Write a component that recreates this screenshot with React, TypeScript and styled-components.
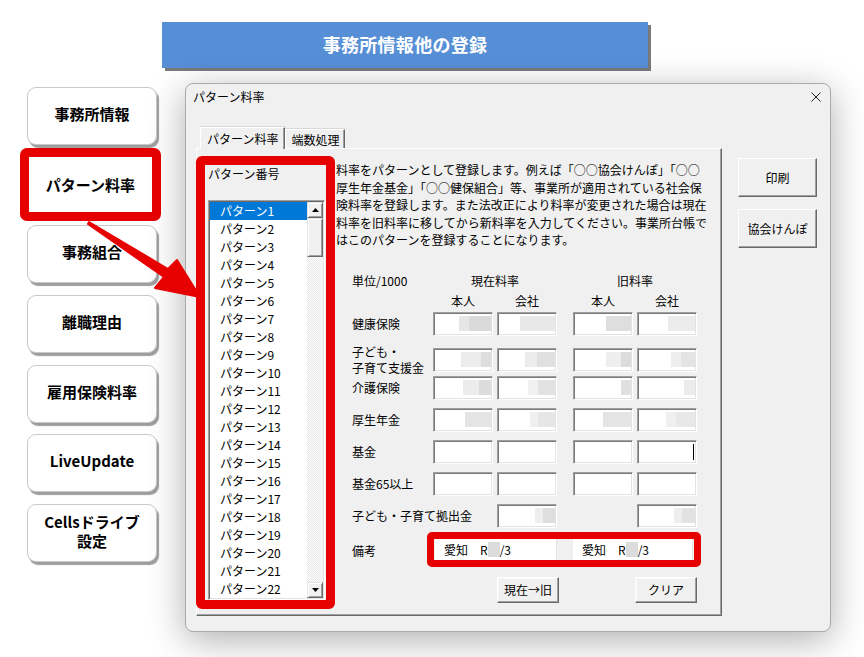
import React from "react";
import styled, { createGlobalStyle } from "styled-components";

const GlobalStyle = createGlobalStyle`
  html, body { margin: 0; padding: 0; background: #ffffff; }
  body { font-family: "Noto Sans CJK JP", "Noto Sans", sans-serif; color: #000; }
  * { box-sizing: border-box; }
`;

const RED = "#e60000";

const Page = styled.div`
  position: relative;
  width: 864px;
  height: 657px;
  overflow: hidden;
  padding-top: 22px;
  background: #ffffff;
`;

const Banner = styled.div`
  margin-left: 162px;
  width: 486px;
  height: 46px;
  padding-bottom: 3px;
  background: #568fd6;
  box-shadow: 3px 3px 0 #7a7a7a;
  color: #ffffff;
  font-weight: 700;
  font-size: 18px;
  display: flex;
  align-items: center;
  justify-content: center;
  letter-spacing: 0.3px;
`;

const Main = styled.div`
  display: flex;
  align-items: flex-start;
  margin-top: 15px;
`;

const Sidebar = styled.div`
  width: 141px;
  margin-left: 20px;
  padding-top: 4px;
  display: flex;
  flex-direction: column;
`;

const MenuButton = styled.div<{ $mt: number }>`
  margin-top: ${(p) => p.$mt}px;
  margin-left: 7px;
  width: 130px;
  height: 58px;
  padding-bottom: 5px;
  background: #ffffff;
  border: 1px solid #c9c9c9;
  border-radius: 9px;
  box-shadow: 2px 3px 1px #9d9d9d;
  display: flex;
  align-items: center;
  justify-content: center;
  text-align: center;
  font-weight: 700;
  font-size: 15px;
  line-height: 19px;
`;

const ActiveFrame = styled.div<{ $mt: number }>`
  margin-top: ${(p) => p.$mt}px;
  width: 141px;
  height: 73px;
  border: 9px solid ${RED};
  border-radius: 7px;
  background: #ffffff;
  display: flex;
  align-items: center;
  justify-content: center;
  font-weight: 700;
  font-size: 15px;
`;

const Dialog = styled.div`
  margin-left: 24px;
  width: 646px;
  height: 549px;
  border: 1px solid #aaaaaa;
  border-radius: 8px;
  background: #f0f0f0;
  box-shadow: 0 8px 36px rgba(0, 0, 0, 0.32);
  display: flex;
  flex-direction: column;
`;

const TitleBar = styled.div`
  height: 36px;
  display: flex;
  justify-content: space-between;
  align-items: flex-start;
  padding: 5px 9px 0 7px;
  font-size: 12px;
  line-height: 16px;
`;

const CloseIcon = styled.svg`
  margin-top: 3px;
  display: block;
`;

const Body = styled.div`
  display: flex;
  align-items: flex-start;
  padding: 7px 13px 0 10px;
`;

const TabControl = styled.div`
  width: 526px;
  display: flex;
  flex-direction: column;
`;

const TabRow = styled.div`
  height: 21px;
  display: flex;
  align-items: flex-end;
  padding-left: 4px;
  position: relative;
  z-index: 1;
`;

const Tab = styled.div<{ $active?: boolean }>`
  height: ${(p) => (p.$active ? 22 : 19)}px;
  margin-bottom: ${(p) => (p.$active ? -1 : 0)}px;
  padding: 0 ${(p) => (p.$active ? "6px 0 6px" : "5px")};
  background: #f0f0f0;
  border-top: 1px solid #ffffff;
  border-left: 1px solid #ffffff;
  border-right: 1px solid #696969;
  box-shadow: inset -1px 0 0 #a0a0a0, 0 -1px 0 #d8d8d8;
  font-size: 12px;
  display: flex;
  align-items: center;
  white-space: nowrap;
`;

const TabPage = styled.div`
  width: 526px;
  height: 468px;
  border-top: 1px solid #ffffff;
  border-left: 1px solid #ffffff;
  border-right: 1px solid #696969;
  border-bottom: 1px solid #696969;
  box-shadow: inset -1px -1px 0 #a0a0a0;
  display: flex;
  align-items: flex-start;
`;

const ListFrame = styled.div`
  margin-left: -1px;
  margin-top: 7px;
  width: 139px;
  height: 453px;
  border: 9px solid ${RED};
  border-radius: 6px;
  padding: 0 1px 0 3px;
  background: #f0f0f0;
  display: flex;
  flex-direction: column;
  position: relative;
  z-index: 2;
`;

const GroupLabel = styled.div`
  height: 17px;
  font-size: 12px;
  line-height: 17px;
`;

const ListBox = styled.div`
  margin-top: 18px;
  width: 117px;
  height: 400px;
  background: #ffffff;
  border-top: 1px solid #a0a0a0;
  border-left: 1px solid #a0a0a0;
  border-bottom: 1px solid #ffffff;
  border-right: 1px solid #ffffff;
  box-shadow: inset 1px 1px 0 #696969, inset -1px -1px 0 #e3e3e3;
  padding: 1px;
  display: flex;
  overflow: hidden;
`;

const Items = styled.div`
  flex: 1;
  overflow: hidden;
`;

const ListItem = styled.div<{ $selected?: boolean }>`
  height: 18px;
  line-height: 17px;
  padding-left: 10px;
  font-size: 12px;
  white-space: nowrap;
  background: ${(p) => (p.$selected ? "#0078d7" : "transparent")};
  color: ${(p) => (p.$selected ? "#ffffff" : "#000000")};
`;

const ScrollBar = styled.div`
  width: 16px;
  display: flex;
  flex-direction: column;
  background-color: #f4f4f4;
  background-image: repeating-conic-gradient(#e6e6e6 0 25%, #ffffff 0 50%);
  background-size: 2px 2px;
`;

const Raised = styled.div<{ $h: number }>`
  height: ${(p) => p.$h}px;
  background: #f0f0f0;
  border-top: 1px solid #e3e3e3;
  border-left: 1px solid #e3e3e3;
  border-right: 1px solid #696969;
  border-bottom: 1px solid #696969;
  box-shadow: inset 1px 1px 0 #ffffff, inset -1px -1px 0 #a0a0a0;
  display: flex;
  align-items: center;
  justify-content: center;
`;

const Spacer = styled.div`
  flex: 1;
`;

const RightPane = styled.div`
  padding-left: 1px;
  padding-top: 12px;
  display: flex;
  flex-direction: column;
`;

const Desc = styled.div`
  font-size: 12px;
  line-height: 17.5px;
  white-space: nowrap;
`;

const RateTable = styled.div`
  margin-top: 23px;
  margin-left: 16px;
  display: flex;
  flex-direction: column;
`;

const Row = styled.div<{ $h: number; $mt: number }>`
  display: grid;
  grid-template-columns: 77px 60px 60px 8px 60px 60px;
  column-gap: 4px;
  height: ${(p) => p.$h}px;
  margin-top: ${(p) => p.$mt}px;
  align-items: center;
  font-size: 12px;
`;

const Label = styled.div<{ $span?: number }>`
  grid-column: 1 / span ${(p) => p.$span ?? 1};
  font-size: 12px;
  line-height: 16px;
  white-space: nowrap;
`;

const Head = styled.div<{ $col: number; $span?: number }>`
  grid-column: ${(p) => p.$col} / span ${(p) => p.$span ?? 1};
  text-align: center;
  line-height: 18px;
  white-space: nowrap;
`;

const Field = styled.div<{ $col: number }>`
  grid-column: ${(p) => p.$col};
  height: 24px;
  background: #ffffff;
  border-top: 1px solid #a0a0a0;
  border-left: 1px solid #a0a0a0;
  border-bottom: 1px solid #ffffff;
  border-right: 1px solid #ffffff;
  box-shadow: inset 1px 1px 0 #7a7a7a, inset -1px -1px 0 #e3e3e3;
  padding: 0 1px;
  display: flex;
  align-items: center;
  justify-content: flex-end;
`;

const Seg = styled.span<{ $w: number; $c: string }>`
  display: block;
  width: ${(p) => p.$w}px;
  height: 15px;
  background: ${(p) => p.$c};
`;

const Caret = styled.span`
  display: block;
  width: 1px;
  height: 16px;
  background: #000000;
  margin-right: 1px;
`;

const NoteFrame = styled.div`
  grid-column: 2 / span 5;
  align-self: start;
  margin: -4px -4px 0 -6px;
  height: 35px;
  border: 7px solid ${RED};
  border-radius: 5px;
  background: #f0f0f0;
  display: flex;
  gap: 16px;
  padding-left: 1px;
  position: relative;
  z-index: 2;
`;

const NoteInput = styled.div<{ $w: number }>`
  width: ${(p) => p.$w}px;
  height: 21px;
  background: #ffffff;
  border-right: 1px solid #e3e3e3;
  padding-left: 9px;
  display: flex;
  align-items: center;
  font-size: 12px;
  white-space: pre;
`;

const NoteBlur = styled.span`
  display: block;
  width: 12px;
  height: 15px;
  background: #dcdcdc;
`;

const PushButton = styled.button<{ $col: number; $end?: boolean }>`
  grid-column: ${(p) => p.$col};
  justify-self: ${(p) => (p.$end ? "end" : "start")};
  width: 62px;
  height: 26px;
  font-family: inherit;
  font-size: 12px;
  color: #000;
  background: #f0f0f0;
  border-top: 1px solid #ffffff;
  border-left: 1px solid #ffffff;
  border-right: 1px solid #696969;
  border-bottom: 1px solid #696969;
  box-shadow: inset -1px -1px 0 #a0a0a0, inset 1px 1px 0 #f8f8f8;
  padding: 0;
  white-space: nowrap;
`;

const RightColumn = styled.div`
  margin-left: 16px;
  margin-top: 31px;
  display: flex;
  flex-direction: column;
  gap: 12px;
`;

const SideButton = styled.button`
  width: 79px;
  height: 39px;
  font-family: inherit;
  font-size: 12px;
  color: #000;
  background: #f0f0f0;
  border-top: 1px solid #ffffff;
  border-left: 1px solid #ffffff;
  border-right: 1px solid #696969;
  border-bottom: 1px solid #696969;
  box-shadow: inset -1px -1px 0 #a0a0a0;
  padding: 0;
`;

const ArrowSvg = styled.svg`
  position: absolute;
  left: 84px;
  top: 216px;
  z-index: 5;
  pointer-events: none;
`;

type Segs = [number, string][];

const rows: { label: React.ReactNode; cells: (Segs | "caret" | null)[] }[] = [
  {
    label: "健康保険",
    cells: [
      [[10, "#e6e6e6"], [22, "#dadada"]],
      [[35, "#e8e8e8"]],
      [[25, "#dedede"]],
      [[27, "#ececec"]],
    ],
  },
  {
    label: (
      <>
        子ども・
        <br />
        子育て支援金
      </>
    ),
    cells: [
      [[20, "#ececec"], [10, "#dedede"]],
      [[12, "#ececec"], [18, "#e0e0e0"]],
      [[15, "#eeeeee"], [10, "#dcdcdc"]],
      [[10, "#eeeeee"], [14, "#e4e4e4"]],
    ],
  },
  {
    label: "介護保険",
    cells: [
      [[16, "#ececec"], [12, "#dcdcdc"]],
      [[10, "#f0f0f0"], [17, "#e2e2e2"]],
      [[10, "#e0e0e0"]],
      [[11, "#ececec"]],
    ],
  },
  {
    label: "厚生年金",
    cells: [
      [[26, "#e4e4e4"]],
      [[8, "#f0f0f0"], [17, "#e6e6e6"]],
      [[28, "#e4e4e4"]],
      [[10, "#f0f0f0"], [19, "#e8e8e8"]],
    ],
  },
  { label: "基金", cells: [null, null, null, "caret"] },
  { label: "基金65以上", cells: [null, null, null, null] },
];

const colOf = [2, 3, 5, 6];

const renderCell = (c: Segs | "caret" | null) => {
  if (c === "caret") return <Caret />;
  if (!c) return null;
  return c.map(([w, col], i) => <Seg key={i} $w={w} $c={col} />);
};

const Triangle: React.FC<{ down?: boolean }> = ({ down }) => (
  <svg width="7" height="4" viewBox="0 0 7 4">
    <polygon points={down ? "0,0 7,0 3.5,4" : "0,4 7,4 3.5,0"} fill="#000" />
  </svg>
);

export default function App() {
  const items = Array.from({ length: 22 }, (_, i) => `パターン${i + 1}`);
  return (
    <>
      <GlobalStyle />
      <Page>
        <Banner>事務所情報他の登録</Banner>
        <Main>
          <Sidebar>
            <MenuButton $mt={0}>事務所情報</MenuButton>
            <ActiveFrame $mt={3}>パターン料率</ActiveFrame>
            <MenuButton $mt={4}>事務組合</MenuButton>
            <MenuButton $mt={12}>離職理由</MenuButton>
            <MenuButton $mt={12}>雇用保険料率</MenuButton>
            <MenuButton $mt={11}>LiveUpdate</MenuButton>
            <MenuButton $mt={12}>
              Cellsドライブ
              <br />
              設定
            </MenuButton>
          </Sidebar>
          <Dialog>
            <TitleBar>
              <span>パターン料率</span>
              <CloseIcon width="10" height="10" viewBox="0 0 10 10">
                <path d="M0.5 0.5 L9.5 9.5 M9.5 0.5 L0.5 9.5" stroke="#222" strokeWidth="1" />
              </CloseIcon>
            </TitleBar>
            <Body>
              <TabControl>
                <TabRow>
                  <Tab $active>パターン料率</Tab>
                  <Tab>端数処理</Tab>
                </TabRow>
                <TabPage>
                  <ListFrame>
                    <GroupLabel>パターン番号</GroupLabel>
                    <ListBox>
                      <Items>
                        {items.map((t, i) => (
                          <ListItem key={t} $selected={i === 0}>
                            {t}
                          </ListItem>
                        ))}
                      </Items>
                      <ScrollBar>
                        <Raised $h={16}>
                          <Triangle />
                        </Raised>
                        <Raised $h={39} />
                        <Spacer />
                        <Raised $h={16}>
                          <Triangle down />
                        </Raised>
                      </ScrollBar>
                    </ListBox>
                  </ListFrame>
                  <RightPane>
                    <Desc>
                      料率をパターンとして登録します。例えば「○○協会けんぽ」「○○
                      <br />
                      厚生年金基金」「○○健保組合」等、事業所が適用されている社会保
                      <br />
                      険料率を登録します。また法改正により料率が変更された場合は現在
                      <br />
                      料率を旧料率に移してから新料率を入力してください。事業所台帳で
                      <br />
                      はこのパターンを登録することになります。
                    </Desc>
                    <RateTable>
                      <Row $h={18} $mt={0}>
                        <Label>単位/1000</Label>
                        <Head $col={2} $span={2}>現在料率</Head>
                        <Head $col={5} $span={2}>旧料率</Head>
                      </Row>
                      <Row $h={18} $mt={2}>
                        <Head $col={2}>本人</Head>
                        <Head $col={3}>会社</Head>
                        <Head $col={5}>本人</Head>
                        <Head $col={6}>会社</Head>
                      </Row>
                      {rows.map((r, ri) => (
                        <Row key={ri} $h={24} $mt={ri === 0 ? 2 : 8}>
                          <Label>{r.label}</Label>
                          {r.cells.map((c, ci) => (
                            <Field key={ci} $col={colOf[ci]}>
                              {renderCell(c)}
                            </Field>
                          ))}
                        </Row>
                      ))}
                      <Row $h={24} $mt={8}>
                        <Label $span={2}>子ども・子育て拠出金</Label>
                        <Field $col={3}>
                          {renderCell([[8, "#eeeeee"], [12, "#dedede"]])}
                        </Field>
                        <Field $col={6}>
                          {renderCell([[8, "#eeeeee"], [13, "#e2e2e2"]])}
                        </Field>
                      </Row>
                      <Row $h={24} $mt={8}>
                        <Label>備考</Label>
                        <NoteFrame>
                          <NoteInput $w={122}>
                            愛知　R<NoteBlur />/3
                          </NoteInput>
                          <NoteInput $w={120}>
                            愛知　R<NoteBlur />/3
                          </NoteInput>
                        </NoteFrame>
                      </Row>
                      <Row $h={26} $mt={17}>
                        <PushButton $col={3}>現在→旧</PushButton>
                        <PushButton $col={6} $end>
                          クリア
                        </PushButton>
                      </Row>
                    </RateTable>
                  </RightPane>
                </TabPage>
              </TabControl>
              <RightColumn>
                <SideButton>印刷</SideButton>
                <SideButton>協会けんぽ</SideButton>
              </RightColumn>
            </Body>
          </Dialog>
        </Main>
        <ArrowSvg width="122" height="86" viewBox="0 0 122 86">
          <polygon
            points="5,6 84,53 93,44 116,81 71,72 80,61 4,8"
            fill={RED}
            stroke={RED}
            strokeWidth="2"
            strokeLinejoin="round"
          />
        </ArrowSvg>
      </Page>
    </>
  );
}
